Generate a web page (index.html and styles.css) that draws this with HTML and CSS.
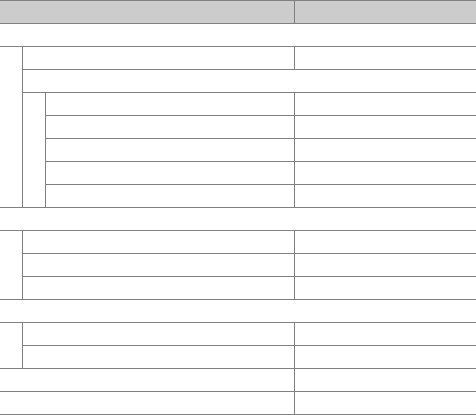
FILE: index.html
```html
<!DOCTYPE html>
<html>
<head>
<meta charset="utf-8">
<link rel="stylesheet" href="styles.css">
</head>
<body>
<div class="tree">
  <div class="cell head name"></div>
  <div class="cell head val sep"></div>

  <div class="cell full c1"></div>

  <div class="cell indent c1 span7"></div>
  <div class="cell c2to3 sep"></div>
  <div class="cell val sep"></div>
  <div class="cell c2to5 sep"></div>
  <div class="cell indent c2 span5 sep"></div>
  <div class="cell c3 sep"></div>
  <div class="cell val sep"></div>
  <div class="cell c3 sep"></div>
  <div class="cell val sep"></div>
  <div class="cell c3 sep"></div>
  <div class="cell val sep"></div>
  <div class="cell c3 sep"></div>
  <div class="cell val sep"></div>
  <div class="cell c3 sep"></div>
  <div class="cell val sep"></div>

  <div class="cell full c1"></div>

  <div class="cell indent c1 span3"></div>
  <div class="cell c2to3 sep"></div>
  <div class="cell val sep"></div>
  <div class="cell c2to3 sep"></div>
  <div class="cell val sep"></div>
  <div class="cell c2to3 sep"></div>
  <div class="cell val sep"></div>

  <div class="cell full c1"></div>

  <div class="cell indent c1 span2"></div>
  <div class="cell c2to3 sep"></div>
  <div class="cell val sep"></div>
  <div class="cell c2to3 sep"></div>
  <div class="cell val sep"></div>

  <div class="cell name"></div>
  <div class="cell val sep"></div>
  <div class="cell name"></div>
  <div class="cell val sep"></div>
</div>
</body>
</html>
```

FILE: styles.css
```css
html, body {
  margin: 0;
  padding: 0;
  background: #ffffff;
  font-family: "Liberation Sans", Arial, sans-serif;
}

.tree {
  display: grid;
  grid-template-columns: 22px 23px 249px 182px;
  grid-auto-rows: 23px;
  border-top: 1px solid #808080;
  width: 476px;
}

.cell {
  border-bottom: 1px solid #808080;
  box-sizing: border-box;
}

.sep {
  border-left: 1px solid #808080;
}

.head {
  background: #cccccc;
}

.name {
  grid-column: 1 / 4;
}

.val {
  grid-column: 4 / 5;
}

.full {
  grid-column: 1 / 5;
}

.c1 {
  grid-column-start: 1;
}

.c2 {
  grid-column: 2 / 3;
}

.c3 {
  grid-column: 3 / 4;
}

.c2to3 {
  grid-column: 2 / 4;
}

.c2to5 {
  grid-column: 2 / 5;
}

.indent.c1 {
  grid-column: 1 / 2;
}

.span7 { grid-row: span 7; }
.span5 { grid-row: span 5; }
.span3 { grid-row: span 3; }
.span2 { grid-row: span 2; }
```
